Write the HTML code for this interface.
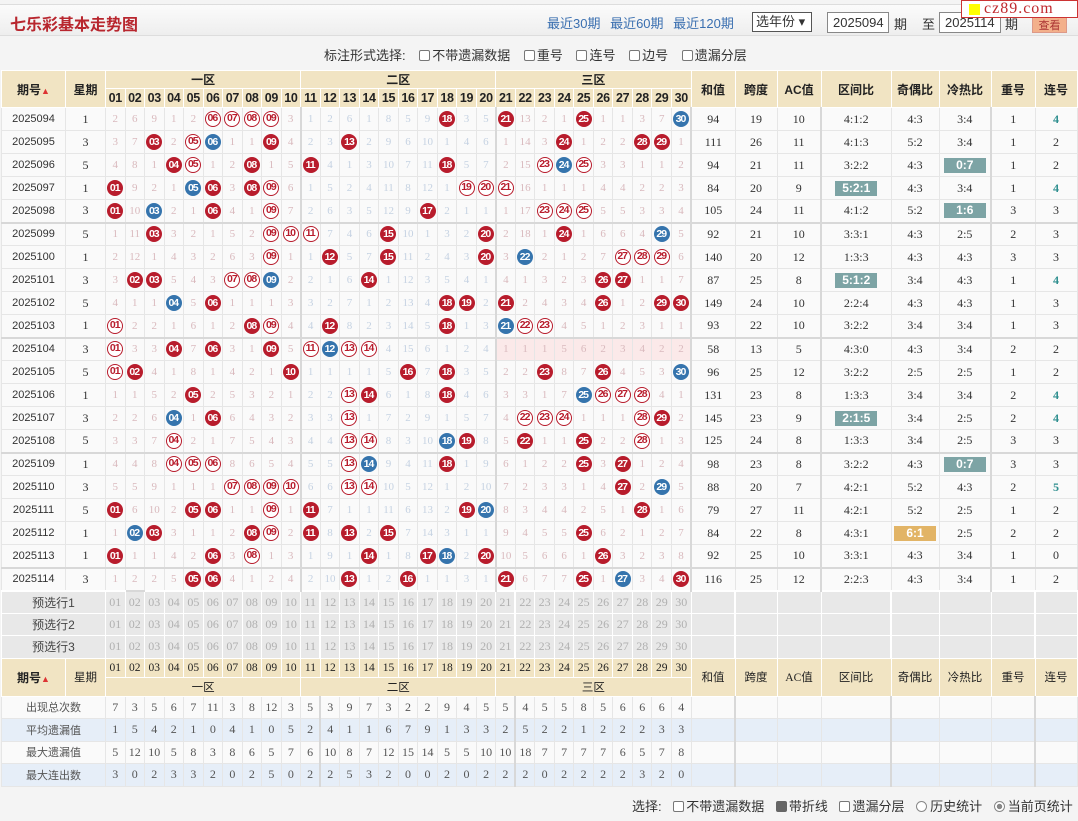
<!DOCTYPE html>
<html><head><meta charset="utf-8">
<style>
*{box-sizing:border-box;margin:0;padding:0}
body{width:1078px;height:821px;background:#f4f4f4;font-family:"Liberation Sans","Noto Sans CJK SC",sans-serif;position:relative;overflow:hidden;color:#333}
.top{position:absolute;left:0;top:4px;width:1078px;height:32px;background:linear-gradient(#fbfbfb,#eeeeee);border-top:1px solid #ddd;border-bottom:1px solid #ddd}
.title{position:absolute;left:10px;top:6px;font-size:16px;font-weight:bold;color:#b8262e}
.links{position:absolute;left:547px;top:8px;font-size:13px;color:#3a6fb0;word-spacing:6px}
.sel{position:absolute;left:752px;top:7px;width:60px;height:20px;border:1px solid #555;background:#fff;font-size:13px;padding-left:3px;line-height:18px}
.inp{position:absolute;top:7px;height:21px;border:1px solid #888;background:#fff;font-size:13px;line-height:19px;padding-left:5px}
.lbl{position:absolute;top:9px;font-size:13px}
.logo{position:absolute;left:961px;top:0;width:117px;height:18px;background:#fff;border:1px solid #c33;color:#c0282e;font-family:"Liberation Serif",serif;font-size:16px;line-height:16px;padding-left:22px;letter-spacing:1px}
.logo:before{content:"";position:absolute;left:7px;top:3px;width:11px;height:11px;background:#ff0}
.opt{position:absolute;top:45px;left:324px;font-size:13px;word-spacing:2px}
.cb{display:inline-block;width:11px;height:11px;border:1px solid #777;border-radius:2px;background:#fff;vertical-align:-1px;margin:0 2px 0 8px}
table{position:absolute;left:1px;top:70px;border-collapse:collapse;table-layout:fixed;width:1076px;background:#fafafa}
td,th{border:1px solid #e6e6e6;text-align:center;font-size:11px;font-family:"Liberation Serif","Noto Sans CJK SC",serif;white-space:nowrap;overflow:hidden;padding:0}
th{background:#f1e4c3;font-family:"Liberation Sans","Noto Sans CJK SC",sans-serif;font-weight:bold;font-size:13px;color:#222;border-color:#fff}
.hn th{font-size:12.5px;height:19px;letter-spacing:-0.3px}
.hz th{height:18px;font-size:12px}
tr.d td{height:23px;color:#d9b9bd}
tr.d td:nth-child(1){font-size:11px;color:#333;font-family:"Liberation Sans",sans-serif}
tr.d td:nth-child(2){color:#333;font-size:12px}
tr.d td:nth-child(n+13):nth-child(-n+22){color:#c5d2e2}
tr.d td:nth-child(n+33){color:#333;font-size:12px}
tr.s td:nth-child(3){border-top:2px solid #d8d8d8}
tr.s td{border-top:2px solid #d8d8d8}
td.z{border-left:2px solid #d8d8d8}
td:nth-child(13),td:nth-child(23),td:nth-child(33),td:nth-child(36),td:nth-child(39){border-left:2px solid #d8d8d8}
b{display:inline-block;width:16px;height:16px;border-radius:50%;line-height:16px;font-size:10.5px;letter-spacing:-1px;color:#fff;font-weight:bold;font-family:"Liberation Sans",sans-serif;vertical-align:middle;text-indent:-1px}
b.r{background:#b81c2c}
b.b{background:#3574ad}
b.o{background:#fff;color:#b81c2c;border:1.5px solid #b81c2c;line-height:13px}
.t{color:#2f8f8f!important;font-weight:bold}
i.h{font-style:normal;display:inline-block;width:42px;height:15px;line-height:15px;background:#7da4a5;color:#fff;font-weight:bold;font-family:"Liberation Sans",sans-serif}
i.g{background:#e2b466}
tr.p td{height:22.5px;background:#e8e8e8;color:#b0b0b0;font-size:12px;border-color:#fff}
tr.p td:first-child{color:#444;font-family:"Liberation Sans","Noto Sans CJK SC",sans-serif}
tr.bh th{font-weight:normal;font-family:"Liberation Serif","Noto Sans CJK SC",serif;font-size:11.5px;height:19px}
tr.st td{height:22.5px;color:#555;font-size:12px}
tr.st td:first-child{font-family:"Liberation Sans","Noto Sans CJK SC",sans-serif;font-size:11px}
tr.st.a td{background:#e6eef8}
tr.pk td:nth-child(n+23):nth-child(-n+32){background:#fbe9e9}
.foot{position:absolute;left:632px;top:796px;font-size:13px}
.rd{display:inline-block;width:11px;height:11px;border:1px solid #888;border-radius:50%;background:#fff;vertical-align:-1px;margin:0 3px 0 8px}
</style></head><body>
<div class="top">
<div class="title">七乐彩基本走势图</div>
<div class="links">最近30期 最近60期 最近120期</div>
<div class="sel">选年份 ▾</div>
<div class="inp" style="left:827px;width:62px">2025094</div>
<div class="lbl" style="left:894px">期</div>
<div class="lbl" style="left:922px">至</div>
<div class="inp" style="left:939px;width:62px">2025114</div>
<div class="lbl" style="left:1005px">期</div>
<div style="position:absolute;left:1032px;top:11px;width:35px;height:17px;background:#f3b08b;border:1px solid #d98;font-size:11px;color:#a33;text-align:center">查看</div>
</div>
<div class="logo">cz89.com</div>
<div class="opt">标注形式选择: <span class="cb"></span>不带遗漏数据 <span class="cb"></span>重号 <span class="cb"></span>连号 <span class="cb"></span>边号 <span class="cb"></span>遗漏分层</div>
<table>
<colgroup><col style="width:64px"><col style="width:40px"><col span="30" style="width:19.53px"><col style="width:44px"><col style="width:42px"><col style="width:44px"><col style="width:70px"><col style="width:48px"><col style="width:52px"><col style="width:44px"><col style="width:42px"></colgroup>
<tr class="hz"><th rowspan="2">期号<span style="color:#d33;font-size:9px">▲</span></th><th rowspan="2">星期</th><th colspan="10">一区</th><th colspan="10">二区</th><th colspan="10">三区</th><th rowspan="2">和值</th><th rowspan="2">跨度</th><th rowspan="2">AC值</th><th rowspan="2">区间比</th><th rowspan="2">奇偶比</th><th rowspan="2">冷热比</th><th rowspan="2">重号</th><th rowspan="2">连号</th></tr>
<tr class="hn"><th>01</th><th>02</th><th>03</th><th>04</th><th>05</th><th>06</th><th>07</th><th>08</th><th>09</th><th>10</th><th>11</th><th>12</th><th>13</th><th>14</th><th>15</th><th>16</th><th>17</th><th>18</th><th>19</th><th>20</th><th>21</th><th>22</th><th>23</th><th>24</th><th>25</th><th>26</th><th>27</th><th>28</th><th>29</th><th>30</th></tr>
<tr class="d"><td>2025094</td><td>1</td><td>2</td><td>6</td><td>9</td><td>1</td><td>2</td><td><b class="o">06</b></td><td><b class="o">07</b></td><td><b class="o">08</b></td><td><b class="o">09</b></td><td>3</td><td>1</td><td>2</td><td>6</td><td>1</td><td>8</td><td>5</td><td>9</td><td><b class="r">18</b></td><td>3</td><td>5</td><td><b class="r">21</b></td><td>13</td><td>2</td><td>1</td><td><b class="r">25</b></td><td>1</td><td>1</td><td>3</td><td>7</td><td><b class="b">30</b></td><td>94</td><td>19</td><td>10</td><td>4:1:2</td><td>4:3</td><td>3:4</td><td>1</td><td class="t">4</td></tr>
<tr class="d"><td>2025095</td><td>3</td><td>3</td><td>7</td><td><b class="r">03</b></td><td>2</td><td><b class="o">05</b></td><td><b class="b">06</b></td><td>1</td><td>1</td><td><b class="r">09</b></td><td>4</td><td>2</td><td>3</td><td><b class="r">13</b></td><td>2</td><td>9</td><td>6</td><td>10</td><td>1</td><td>4</td><td>6</td><td>1</td><td>14</td><td>3</td><td><b class="r">24</b></td><td>1</td><td>2</td><td>2</td><td><b class="r">28</b></td><td><b class="r">29</b></td><td>1</td><td>111</td><td>26</td><td>11</td><td>4:1:3</td><td>5:2</td><td>3:4</td><td>1</td><td>2</td></tr>
<tr class="d"><td>2025096</td><td>5</td><td>4</td><td>8</td><td>1</td><td><b class="r">04</b></td><td><b class="o">05</b></td><td>1</td><td>2</td><td><b class="r">08</b></td><td>1</td><td>5</td><td><b class="r">11</b></td><td>4</td><td>1</td><td>3</td><td>10</td><td>7</td><td>11</td><td><b class="r">18</b></td><td>5</td><td>7</td><td>2</td><td>15</td><td><b class="o">23</b></td><td><b class="b">24</b></td><td><b class="o">25</b></td><td>3</td><td>3</td><td>1</td><td>1</td><td>2</td><td>94</td><td>21</td><td>11</td><td>3:2:2</td><td>4:3</td><td><i class="h">0:7</i></td><td>1</td><td>2</td></tr>
<tr class="d"><td>2025097</td><td>1</td><td><b class="r">01</b></td><td>9</td><td>2</td><td>1</td><td><b class="b">05</b></td><td><b class="r">06</b></td><td>3</td><td><b class="r">08</b></td><td><b class="o">09</b></td><td>6</td><td>1</td><td>5</td><td>2</td><td>4</td><td>11</td><td>8</td><td>12</td><td>1</td><td><b class="o">19</b></td><td><b class="o">20</b></td><td><b class="o">21</b></td><td>16</td><td>1</td><td>1</td><td>1</td><td>4</td><td>4</td><td>2</td><td>2</td><td>3</td><td>84</td><td>20</td><td>9</td><td><i class="h">5:2:1</i></td><td>4:3</td><td>3:4</td><td>1</td><td class="t">4</td></tr>
<tr class="d"><td>2025098</td><td>3</td><td><b class="r">01</b></td><td>10</td><td><b class="b">03</b></td><td>2</td><td>1</td><td><b class="r">06</b></td><td>4</td><td>1</td><td><b class="o">09</b></td><td>7</td><td>2</td><td>6</td><td>3</td><td>5</td><td>12</td><td>9</td><td><b class="r">17</b></td><td>2</td><td>1</td><td>1</td><td>1</td><td>17</td><td><b class="o">23</b></td><td><b class="o">24</b></td><td><b class="o">25</b></td><td>5</td><td>5</td><td>3</td><td>3</td><td>4</td><td>105</td><td>24</td><td>11</td><td>4:1:2</td><td>5:2</td><td><i class="h">1:6</i></td><td>3</td><td>3</td></tr>
<tr class="d s"><td>2025099</td><td>5</td><td>1</td><td>11</td><td><b class="r">03</b></td><td>3</td><td>2</td><td>1</td><td>5</td><td>2</td><td><b class="o">09</b></td><td><b class="o">10</b></td><td><b class="o">11</b></td><td>7</td><td>4</td><td>6</td><td><b class="r">15</b></td><td>10</td><td>1</td><td>3</td><td>2</td><td><b class="r">20</b></td><td>2</td><td>18</td><td>1</td><td><b class="r">24</b></td><td>1</td><td>6</td><td>6</td><td>4</td><td><b class="b">29</b></td><td>5</td><td>92</td><td>21</td><td>10</td><td>3:3:1</td><td>4:3</td><td>2:5</td><td>2</td><td>3</td></tr>
<tr class="d"><td>2025100</td><td>1</td><td>2</td><td>12</td><td>1</td><td>4</td><td>3</td><td>2</td><td>6</td><td>3</td><td><b class="o">09</b></td><td>1</td><td>1</td><td><b class="r">12</b></td><td>5</td><td>7</td><td><b class="r">15</b></td><td>11</td><td>2</td><td>4</td><td>3</td><td><b class="r">20</b></td><td>3</td><td><b class="b">22</b></td><td>2</td><td>1</td><td>2</td><td>7</td><td><b class="o">27</b></td><td><b class="o">28</b></td><td><b class="o">29</b></td><td>6</td><td>140</td><td>20</td><td>12</td><td>1:3:3</td><td>4:3</td><td>4:3</td><td>3</td><td>3</td></tr>
<tr class="d"><td>2025101</td><td>3</td><td>3</td><td><b class="r">02</b></td><td><b class="r">03</b></td><td>5</td><td>4</td><td>3</td><td><b class="o">07</b></td><td><b class="o">08</b></td><td><b class="b">09</b></td><td>2</td><td>2</td><td>1</td><td>6</td><td><b class="r">14</b></td><td>1</td><td>12</td><td>3</td><td>5</td><td>4</td><td>1</td><td>4</td><td>1</td><td>3</td><td>2</td><td>3</td><td><b class="r">26</b></td><td><b class="r">27</b></td><td>1</td><td>1</td><td>7</td><td>87</td><td>25</td><td>8</td><td><i class="h">5:1:2</i></td><td>3:4</td><td>4:3</td><td>1</td><td class="t">4</td></tr>
<tr class="d"><td>2025102</td><td>5</td><td>4</td><td>1</td><td>1</td><td><b class="b">04</b></td><td>5</td><td><b class="r">06</b></td><td>1</td><td>1</td><td>1</td><td>3</td><td>3</td><td>2</td><td>7</td><td>1</td><td>2</td><td>13</td><td>4</td><td><b class="r">18</b></td><td><b class="r">19</b></td><td>2</td><td><b class="r">21</b></td><td>2</td><td>4</td><td>3</td><td>4</td><td><b class="r">26</b></td><td>1</td><td>2</td><td><b class="r">29</b></td><td><b class="r">30</b></td><td>149</td><td>24</td><td>10</td><td>2:2:4</td><td>4:3</td><td>4:3</td><td>1</td><td>3</td></tr>
<tr class="d"><td>2025103</td><td>1</td><td><b class="o">01</b></td><td>2</td><td>2</td><td>1</td><td>6</td><td>1</td><td>2</td><td><b class="r">08</b></td><td><b class="o">09</b></td><td>4</td><td>4</td><td><b class="r">12</b></td><td>8</td><td>2</td><td>3</td><td>14</td><td>5</td><td><b class="r">18</b></td><td>1</td><td>3</td><td><b class="b">21</b></td><td><b class="o">22</b></td><td><b class="o">23</b></td><td>4</td><td>5</td><td>1</td><td>2</td><td>3</td><td>1</td><td>1</td><td>93</td><td>22</td><td>10</td><td>3:2:2</td><td>3:4</td><td>3:4</td><td>1</td><td>3</td></tr>
<tr class="d s pk"><td>2025104</td><td>3</td><td><b class="o">01</b></td><td>3</td><td>3</td><td><b class="r">04</b></td><td>7</td><td><b class="r">06</b></td><td>3</td><td>1</td><td><b class="r">09</b></td><td>5</td><td><b class="o">11</b></td><td><b class="b">12</b></td><td><b class="o">13</b></td><td><b class="o">14</b></td><td>4</td><td>15</td><td>6</td><td>1</td><td>2</td><td>4</td><td>1</td><td>1</td><td>1</td><td>5</td><td>6</td><td>2</td><td>3</td><td>4</td><td>2</td><td>2</td><td>58</td><td>13</td><td>5</td><td>4:3:0</td><td>4:3</td><td>3:4</td><td>2</td><td>2</td></tr>
<tr class="d"><td>2025105</td><td>5</td><td><b class="o">01</b></td><td><b class="r">02</b></td><td>4</td><td>1</td><td>8</td><td>1</td><td>4</td><td>2</td><td>1</td><td><b class="r">10</b></td><td>1</td><td>1</td><td>1</td><td>1</td><td>5</td><td><b class="r">16</b></td><td>7</td><td><b class="r">18</b></td><td>3</td><td>5</td><td>2</td><td>2</td><td><b class="r">23</b></td><td>8</td><td>7</td><td><b class="r">26</b></td><td>4</td><td>5</td><td>3</td><td><b class="b">30</b></td><td>96</td><td>25</td><td>12</td><td>3:2:2</td><td>2:5</td><td>2:5</td><td>1</td><td>2</td></tr>
<tr class="d"><td>2025106</td><td>1</td><td>1</td><td>1</td><td>5</td><td>2</td><td><b class="r">05</b></td><td>2</td><td>5</td><td>3</td><td>2</td><td>1</td><td>2</td><td>2</td><td><b class="o">13</b></td><td><b class="r">14</b></td><td>6</td><td>1</td><td>8</td><td><b class="r">18</b></td><td>4</td><td>6</td><td>3</td><td>3</td><td>1</td><td>7</td><td><b class="b">25</b></td><td><b class="o">26</b></td><td><b class="o">27</b></td><td><b class="o">28</b></td><td>4</td><td>1</td><td>131</td><td>23</td><td>8</td><td>1:3:3</td><td>3:4</td><td>3:4</td><td>2</td><td class="t">4</td></tr>
<tr class="d"><td>2025107</td><td>3</td><td>2</td><td>2</td><td>6</td><td><b class="b">04</b></td><td>1</td><td><b class="r">06</b></td><td>6</td><td>4</td><td>3</td><td>2</td><td>3</td><td>3</td><td><b class="o">13</b></td><td>1</td><td>7</td><td>2</td><td>9</td><td>1</td><td>5</td><td>7</td><td>4</td><td><b class="o">22</b></td><td><b class="o">23</b></td><td><b class="o">24</b></td><td>1</td><td>1</td><td>1</td><td><b class="o">28</b></td><td><b class="r">29</b></td><td>2</td><td>145</td><td>23</td><td>9</td><td><i class="h">2:1:5</i></td><td>3:4</td><td>2:5</td><td>2</td><td class="t">4</td></tr>
<tr class="d"><td>2025108</td><td>5</td><td>3</td><td>3</td><td>7</td><td><b class="o">04</b></td><td>2</td><td>1</td><td>7</td><td>5</td><td>4</td><td>3</td><td>4</td><td>4</td><td><b class="o">13</b></td><td><b class="o">14</b></td><td>8</td><td>3</td><td>10</td><td><b class="b">18</b></td><td><b class="r">19</b></td><td>8</td><td>5</td><td><b class="r">22</b></td><td>1</td><td>1</td><td><b class="r">25</b></td><td>2</td><td>2</td><td><b class="o">28</b></td><td>1</td><td>3</td><td>125</td><td>24</td><td>8</td><td>1:3:3</td><td>3:4</td><td>2:5</td><td>3</td><td>3</td></tr>
<tr class="d s"><td>2025109</td><td>1</td><td>4</td><td>4</td><td>8</td><td><b class="o">04</b></td><td><b class="o">05</b></td><td><b class="o">06</b></td><td>8</td><td>6</td><td>5</td><td>4</td><td>5</td><td>5</td><td><b class="o">13</b></td><td><b class="b">14</b></td><td>9</td><td>4</td><td>11</td><td><b class="r">18</b></td><td>1</td><td>9</td><td>6</td><td>1</td><td>2</td><td>2</td><td><b class="r">25</b></td><td>3</td><td><b class="r">27</b></td><td>1</td><td>2</td><td>4</td><td>98</td><td>23</td><td>8</td><td>3:2:2</td><td>4:3</td><td><i class="h">0:7</i></td><td>3</td><td>3</td></tr>
<tr class="d"><td>2025110</td><td>3</td><td>5</td><td>5</td><td>9</td><td>1</td><td>1</td><td>1</td><td><b class="o">07</b></td><td><b class="o">08</b></td><td><b class="o">09</b></td><td><b class="o">10</b></td><td>6</td><td>6</td><td><b class="o">13</b></td><td><b class="o">14</b></td><td>10</td><td>5</td><td>12</td><td>1</td><td>2</td><td>10</td><td>7</td><td>2</td><td>3</td><td>3</td><td>1</td><td>4</td><td><b class="r">27</b></td><td>2</td><td><b class="b">29</b></td><td>5</td><td>88</td><td>20</td><td>7</td><td>4:2:1</td><td>5:2</td><td>4:3</td><td>2</td><td class="t">5</td></tr>
<tr class="d"><td>2025111</td><td>5</td><td><b class="r">01</b></td><td>6</td><td>10</td><td>2</td><td><b class="r">05</b></td><td><b class="r">06</b></td><td>1</td><td>1</td><td><b class="o">09</b></td><td>1</td><td><b class="r">11</b></td><td>7</td><td>1</td><td>1</td><td>11</td><td>6</td><td>13</td><td>2</td><td><b class="r">19</b></td><td><b class="b">20</b></td><td>8</td><td>3</td><td>4</td><td>4</td><td>2</td><td>5</td><td>1</td><td><b class="r">28</b></td><td>1</td><td>6</td><td>79</td><td>27</td><td>11</td><td>4:2:1</td><td>5:2</td><td>2:5</td><td>1</td><td>2</td></tr>
<tr class="d"><td>2025112</td><td>1</td><td>1</td><td><b class="b">02</b></td><td><b class="r">03</b></td><td>3</td><td>1</td><td>1</td><td>2</td><td><b class="r">08</b></td><td><b class="o">09</b></td><td>2</td><td><b class="r">11</b></td><td>8</td><td><b class="r">13</b></td><td>2</td><td><b class="r">15</b></td><td>7</td><td>14</td><td>3</td><td>1</td><td>1</td><td>9</td><td>4</td><td>5</td><td>5</td><td><b class="r">25</b></td><td>6</td><td>2</td><td>1</td><td>2</td><td>7</td><td>84</td><td>22</td><td>8</td><td>4:3:1</td><td><i class="h g">6:1</i></td><td>2:5</td><td>2</td><td>2</td></tr>
<tr class="d"><td>2025113</td><td>1</td><td><b class="r">01</b></td><td>1</td><td>1</td><td>4</td><td>2</td><td><b class="r">06</b></td><td>3</td><td><b class="o">08</b></td><td>1</td><td>3</td><td>1</td><td>9</td><td>1</td><td><b class="r">14</b></td><td>1</td><td>8</td><td><b class="r">17</b></td><td><b class="b">18</b></td><td>2</td><td><b class="r">20</b></td><td>10</td><td>5</td><td>6</td><td>6</td><td>1</td><td><b class="r">26</b></td><td>3</td><td>2</td><td>3</td><td>8</td><td>92</td><td>25</td><td>10</td><td>3:3:1</td><td>4:3</td><td>3:4</td><td>1</td><td>0</td></tr>
<tr class="d s"><td>2025114</td><td>3</td><td>1</td><td>2</td><td>2</td><td>5</td><td><b class="r">05</b></td><td><b class="r">06</b></td><td>4</td><td>1</td><td>2</td><td>4</td><td>2</td><td>10</td><td><b class="r">13</b></td><td>1</td><td>2</td><td><b class="r">16</b></td><td>1</td><td>1</td><td>3</td><td>1</td><td><b class="r">21</b></td><td>6</td><td>7</td><td>7</td><td><b class="r">25</b></td><td>1</td><td><b class="b">27</b></td><td>3</td><td>4</td><td><b class="r">30</b></td><td>116</td><td>25</td><td>12</td><td>2:2:3</td><td>4:3</td><td>3:4</td><td>1</td><td>2</td></tr>
<tr class="p s"><td colspan="2">预选行1</td><td>01</td><td>02</td><td>03</td><td>04</td><td>05</td><td>06</td><td>07</td><td>08</td><td>09</td><td>10</td><td>11</td><td>12</td><td>13</td><td>14</td><td>15</td><td>16</td><td>17</td><td>18</td><td>19</td><td>20</td><td>21</td><td>22</td><td>23</td><td>24</td><td>25</td><td>26</td><td>27</td><td>28</td><td>29</td><td>30</td><td></td><td></td><td></td><td></td><td></td><td></td><td></td><td></td></tr>
<tr class="p"><td colspan="2">预选行2</td><td>01</td><td>02</td><td>03</td><td>04</td><td>05</td><td>06</td><td>07</td><td>08</td><td>09</td><td>10</td><td>11</td><td>12</td><td>13</td><td>14</td><td>15</td><td>16</td><td>17</td><td>18</td><td>19</td><td>20</td><td>21</td><td>22</td><td>23</td><td>24</td><td>25</td><td>26</td><td>27</td><td>28</td><td>29</td><td>30</td><td></td><td></td><td></td><td></td><td></td><td></td><td></td><td></td></tr>
<tr class="p"><td colspan="2">预选行3</td><td>01</td><td>02</td><td>03</td><td>04</td><td>05</td><td>06</td><td>07</td><td>08</td><td>09</td><td>10</td><td>11</td><td>12</td><td>13</td><td>14</td><td>15</td><td>16</td><td>17</td><td>18</td><td>19</td><td>20</td><td>21</td><td>22</td><td>23</td><td>24</td><td>25</td><td>26</td><td>27</td><td>28</td><td>29</td><td>30</td><td></td><td></td><td></td><td></td><td></td><td></td><td></td><td></td></tr>
<tr class="bh"><th rowspan="2" style="font-weight:bold;font-family:'Liberation Sans','Noto Sans CJK SC',sans-serif;font-size:12px">期号<span style="color:#d33;font-size:9px">▲</span></th><th rowspan="2">星期</th><th>01</th><th>02</th><th>03</th><th>04</th><th>05</th><th>06</th><th>07</th><th>08</th><th>09</th><th>10</th><th>11</th><th>12</th><th>13</th><th>14</th><th>15</th><th>16</th><th>17</th><th>18</th><th>19</th><th>20</th><th>21</th><th>22</th><th>23</th><th>24</th><th>25</th><th>26</th><th>27</th><th>28</th><th>29</th><th>30</th><th rowspan="2">和值</th><th rowspan="2">跨度</th><th rowspan="2">AC值</th><th rowspan="2">区间比</th><th rowspan="2">奇偶比</th><th rowspan="2">冷热比</th><th rowspan="2">重号</th><th rowspan="2">连号</th></tr>
<tr class="bh"><th colspan="10">一区</th><th colspan="10">二区</th><th colspan="10">三区</th></tr>
<tr class="st"><td colspan="2">出现总次数</td><td>7</td><td>3</td><td>5</td><td>6</td><td>7</td><td>11</td><td>3</td><td>8</td><td>12</td><td>3</td><td>5</td><td>3</td><td>9</td><td>7</td><td>3</td><td>2</td><td>2</td><td>9</td><td>4</td><td>5</td><td>5</td><td>4</td><td>5</td><td>5</td><td>8</td><td>5</td><td>6</td><td>6</td><td>6</td><td>4</td><td></td><td></td><td></td><td></td><td></td><td></td><td></td><td></td></tr>
<tr class="st a"><td colspan="2">平均遗漏值</td><td>1</td><td>5</td><td>4</td><td>2</td><td>1</td><td>0</td><td>4</td><td>1</td><td>0</td><td>5</td><td>2</td><td>4</td><td>1</td><td>1</td><td>6</td><td>7</td><td>9</td><td>1</td><td>3</td><td>3</td><td>2</td><td>5</td><td>2</td><td>2</td><td>1</td><td>2</td><td>2</td><td>2</td><td>3</td><td>3</td><td></td><td></td><td></td><td></td><td></td><td></td><td></td><td></td></tr>
<tr class="st"><td colspan="2">最大遗漏值</td><td>5</td><td>12</td><td>10</td><td>5</td><td>8</td><td>3</td><td>8</td><td>6</td><td>5</td><td>7</td><td>6</td><td>10</td><td>8</td><td>7</td><td>12</td><td>15</td><td>14</td><td>5</td><td>5</td><td>10</td><td>10</td><td>18</td><td>7</td><td>7</td><td>7</td><td>7</td><td>6</td><td>5</td><td>7</td><td>8</td><td></td><td></td><td></td><td></td><td></td><td></td><td></td><td></td></tr>
<tr class="st a"><td colspan="2">最大连出数</td><td>3</td><td>0</td><td>2</td><td>3</td><td>3</td><td>2</td><td>0</td><td>2</td><td>5</td><td>0</td><td>2</td><td>2</td><td>5</td><td>3</td><td>2</td><td>0</td><td>0</td><td>2</td><td>0</td><td>2</td><td>2</td><td>2</td><td>0</td><td>2</td><td>2</td><td>2</td><td>2</td><td>3</td><td>2</td><td>0</td><td></td><td></td><td></td><td></td><td></td><td></td><td></td><td></td></tr>
</table>
<div class="foot">选择: <span class="cb"></span>不带遗漏数据 <span class="cb" style="background:#666;border-color:#666"></span>带折线 <span class="cb"></span>遗漏分层 <span class="rd"></span>历史统计 <span class="rd" style="background:radial-gradient(#888 40%,#fff 45%)"></span>当前页统计</div>
</body></html>
